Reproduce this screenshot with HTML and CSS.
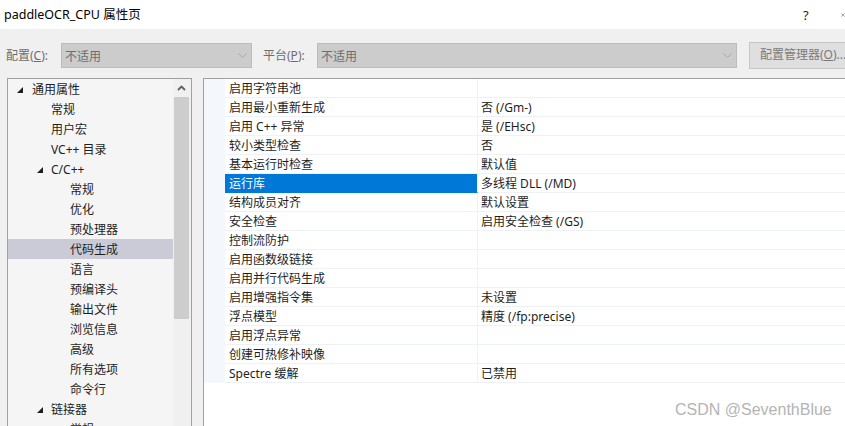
FILE: index.html
```html
<!DOCTYPE html>
<html lang="zh-CN">
<head>
<meta charset="utf-8">
<title>paddleOCR_CPU 属性页</title>
<link rel="stylesheet" href="styles.css">
</head>
<body>
<div class="window">
  <header class="titlebar">
    <span class="title">paddleOCR_CPU 属性页</span>
    <span class="help">?</span>
    <span class="close"><svg width="12" height="12" viewBox="0 0 12 12"><path d="M1 1 L11 11 M11 1 L1 11" stroke="#1e1e1e" stroke-width="1.2" fill="none"/></svg></span>
  </header>

  <div class="toolbar">
    <span class="lbl lbl-config">配置(<u>C</u>):</span>
    <div class="combo combo-config"><span>不适用</span><svg class="chev" width="9" height="5" viewBox="0 0 9 5"><path d="M0.5 0.5 L4.5 4.5 L8.5 0.5" stroke="#a8a8a8" fill="none"/></svg></div>
    <span class="lbl lbl-platform">平台(<u>P</u>):</span>
    <div class="combo combo-platform"><span>不适用</span><svg class="chev" width="9" height="5" viewBox="0 0 9 5"><path d="M0.5 0.5 L4.5 4.5 L8.5 0.5" stroke="#a8a8a8" fill="none"/></svg></div>
    <div class="btn">配置管理器(<u>O</u>)...</div>
  </div>

  <div class="main">
    <div class="tree">
      <ul class="tree-list">
        <li class="node l0"><svg class="tri" width="6" height="6" viewBox="0 0 6 6"><polygon points="6,0 6,6 0,6" fill="#1e1e1e"/></svg>通用属性</li>
        <li class="node l1">常规</li>
        <li class="node l1">用户宏</li>
        <li class="node l1">VC++ 目录</li>
        <li class="node l1"><svg class="tri" width="6" height="6" viewBox="0 0 6 6"><polygon points="6,0 6,6 0,6" fill="#1e1e1e"/></svg>C/C++</li>
        <li class="node l2">常规</li>
        <li class="node l2">优化</li>
        <li class="node l2">预处理器</li>
        <li class="node l2 selected">代码生成</li>
        <li class="node l2">语言</li>
        <li class="node l2">预编译头</li>
        <li class="node l2">输出文件</li>
        <li class="node l2">浏览信息</li>
        <li class="node l2">高级</li>
        <li class="node l2">所有选项</li>
        <li class="node l2">命令行</li>
        <li class="node l1"><svg class="tri" width="6" height="6" viewBox="0 0 6 6"><polygon points="6,0 6,6 0,6" fill="#1e1e1e"/></svg>链接器</li>
        <li class="node l2">常规</li>
      </ul>
      <div class="scrollbar">
        <div class="sb-arrow"><svg width="9" height="6" viewBox="0 0 9 6"><path d="M1 5 L4.5 1.5 L8 5" stroke="#606060" stroke-width="1.8" fill="none"/></svg></div>
        <div class="sb-thumb"></div>
      </div>
    </div>

    <div class="grid">
      <div class="row"><div class="gutter"></div><div class="name">启用字符串池</div><div class="value"></div></div>
      <div class="row"><div class="gutter"></div><div class="name">启用最小重新生成</div><div class="value">否 (/Gm-)</div></div>
      <div class="row"><div class="gutter"></div><div class="name">启用 C++ 异常</div><div class="value">是 (/EHsc)</div></div>
      <div class="row"><div class="gutter"></div><div class="name">较小类型检查</div><div class="value">否</div></div>
      <div class="row"><div class="gutter"></div><div class="name">基本运行时检查</div><div class="value">默认值</div></div>
      <div class="row active"><div class="gutter"></div><div class="name">运行库</div><div class="value">多线程 DLL (/MD)<span class="dd-btn"></span></div></div>
      <div class="row"><div class="gutter"></div><div class="name">结构成员对齐</div><div class="value">默认设置</div></div>
      <div class="row"><div class="gutter"></div><div class="name">安全检查</div><div class="value">启用安全检查 (/GS)</div></div>
      <div class="row"><div class="gutter"></div><div class="name">控制流防护</div><div class="value"></div></div>
      <div class="row"><div class="gutter"></div><div class="name">启用函数级链接</div><div class="value"></div></div>
      <div class="row"><div class="gutter"></div><div class="name">启用并行代码生成</div><div class="value"></div></div>
      <div class="row"><div class="gutter"></div><div class="name">启用增强指令集</div><div class="value">未设置</div></div>
      <div class="row"><div class="gutter"></div><div class="name">浮点模型</div><div class="value">精度 (/fp:precise)</div></div>
      <div class="row"><div class="gutter"></div><div class="name">启用浮点异常</div><div class="value"></div></div>
      <div class="row"><div class="gutter"></div><div class="name">创建可热修补映像</div><div class="value"></div></div>
      <div class="row"><div class="gutter"></div><div class="name">Spectre 缓解</div><div class="value">已禁用</div></div>
    </div>
  </div>

  <div class="watermark">CSDN @SeventhBlue</div>
</div>
</body>
</html>
```

FILE: styles.css
```css
* { box-sizing: border-box; }

html, body {
  margin: 0;
  padding: 0;
}

body {
  width: 845px;
  height: 426px;
  overflow: hidden;
  background: #f0f0f0;
  font-family: "Noto Sans", "Noto Sans CJK SC", sans-serif;
  font-size: 12px;
  color: #1e1e1e;
}

.window {
  position: relative;
  width: 845px;
  height: 426px;
  display: flex;
  flex-direction: column;
}

/* title bar */
.titlebar {
  height: 29px;
  flex: none;
  background: #ffffff;
  display: flex;
  align-items: center;
  padding-left: 4px;
  white-space: nowrap;
}
.title {
  font-size: 12.5px;
  line-height: 16px;
  color: #000;
  flex: 1;
}
.help {
  font-size: 13px;
  line-height: 16px;
  color: #1e1e1e;
  width: 38px;
  flex: none;
}
.close {
  display: flex;
  width: 4px;
  flex: none;
  overflow: hidden;
  justify-content: flex-start;
}

/* toolbar */
.toolbar {
  height: 49px;
  flex: none;
  display: flex;
  align-items: flex-start;
  padding-top: 14px;
  padding-left: 6px;
  white-space: nowrap;
  overflow: hidden;
}
.toolbar > * { flex: none; }
.lbl {
  color: #6d6d6d;
  line-height: 25px;
}
.lbl-config { width: 55px; }
.lbl-platform { width: 54px; }
.lbl u { text-decoration: underline; }
.combo {
  height: 25px;
  background: #cccccc;
  border: 1px solid #bcbcbc;
  display: flex;
  align-items: center;
  padding-left: 3px;
  padding-right: 4px;
  color: #6d6d6d;
}
.combo span { flex: 1; }
.combo-config { width: 191px; margin-right: 11px; }
.combo-platform { width: 420px; margin-right: 12px; }
.btn {
  height: 27px;
  width: 110px;
  background: #dfdfdf;
  border: 1px solid #c6c6c6;
  color: #7a7a7a;
  line-height: 24px;
  padding-left: 10px;
  margin-top: -1px;
}

/* main area */
.main {
  flex: 1;
  display: flex;
  align-items: stretch;
  min-height: 0;
}

/* tree */
.tree {
  width: 185px;
  margin-left: 7px;
  flex: none;
  border: 1px solid #a0a0a0;
  border-bottom: none;
  background: #f5f5f5;
  display: flex;
  overflow: hidden;
}
.tree-list {
  list-style: none;
  margin: 0;
  padding: 0;
  width: 165px;
  flex: none;
}
.node {
  height: 20px;
  line-height: 20px;
  padding-top: 2px;
  display: flex;
  align-items: center;
  white-space: nowrap;
  position: relative;
}
.node.l0 { padding-left: 24px; }
.node.l1 { padding-left: 43px; }
.node.l2 { padding-left: 62px; }
.node.selected { background: #cacbd6; }
.tri {
  position: absolute;
  top: 8px;
}
.node.l0 .tri { left: 9px; }
.node.l1 .tri { left: 29px; }

.scrollbar {
  width: 18px;
  flex: none;
  background: #f0f0f0;
  padding: 0 2px 0 1px;
  display: flex;
  flex-direction: column;
}
.sb-arrow {
  height: 18px;
  display: flex;
  align-items: center;
  justify-content: center;
}
.sb-thumb {
  height: 222px;
  background: #cdcdcd;
}

/* property grid */
.grid {
  width: 662px;
  margin-left: 11px;
  flex: none;
  background: #ffffff;
  border-left: 1px solid #a0a0a0;
  border-top: 1px solid #a0a0a0;
}
.row {
  display: flex;
  height: 19px;
}
.gutter {
  width: 21px;
  flex: none;
  background: #f4f7fc;
}
.name {
  width: 253px;
  flex: none;
  padding-left: 4px;
  padding-top: 1px;
  line-height: 17px;
  border-right: 1px solid #eef1f7;
  border-bottom: 1px solid #eef1f7;
  white-space: nowrap;
}
.value {
  flex: 1;
  padding-left: 3px;
  padding-top: 1px;
  line-height: 17px;
  border-bottom: 1px solid #eef1f7;
  white-space: nowrap;
  display: flex;
  align-items: center;
}
.row.active .name {
  background: #0078d7;
  color: #ffffff;
  border-bottom-color: #0078d7;
}
.dd-btn {
  margin-left: auto;
  margin-right: 2px;
  margin-top: -1px;
  width: 18px;
  height: 18px;
  border: 1px solid #0078d7;
}

/* watermark */
.watermark {
  position: absolute;
  left: 675px;
  top: 400px;
  font-family: "Liberation Sans", sans-serif;
  font-size: 16px;
  line-height: 20px;
  color: #b4b4b4;
  white-space: nowrap;
}
```
